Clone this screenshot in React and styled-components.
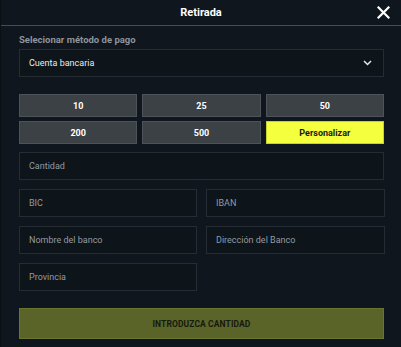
import React from "react";
import styled, { createGlobalStyle } from "styled-components";

const Global = createGlobalStyle`
  html, body { margin: 0; padding: 0; background: #0f161d; }
  body { font-family: Roboto, "Noto Sans", "Liberation Sans", sans-serif; }
  * { box-sizing: border-box; }
`;

const Modal = styled.div`
  width: 401px;
  height: 347px;
  background: #0f161d;
  display: flex;
  flex-direction: column;
  border-left: 1px solid #0a0f14;
`;

const Header = styled.div`
  height: 26px;
  display: flex;
  align-items: center;
  justify-content: center;
  position: relative;
  border-bottom: 1px solid #454c53;
  color: #ffffff;
  font-weight: 700;
  font-size: 11px;
`;

const Close = styled.button`
  position: absolute;
  right: 11px;
  top: 5px;
  width: 14px;
  height: 14px;
  padding: 0;
  border: 0;
  background: none;
  display: flex;
  align-items: center;
  justify-content: center;
`;

const Body = styled.div`
  padding: 8px 17px 0 18px;
  display: flex;
  flex-direction: column;
`;

const Label = styled.div`
  color: #8d949b;
  font-size: 9.5px;
  font-weight: 700;
  height: 15px;
  line-height: 12px;
`;

const Field = styled.div`
  height: 28px;
  border: 1px solid #252c33;
  background: #0d141a;
  display: flex;
  align-items: center;
  justify-content: space-between;
  padding: 0 10px 0 9px;
  font-size: 9px;
  color: ${(p) => (p.$filled ? "#e9ecee" : "#959ba1")};
`;

const Chevron = styled.svg`
  width: 9px;
  height: 6px;
  margin-right: 1px;
`;

const Amounts = styled.div`
  margin-top: 17px;
  display: grid;
  grid-template-columns: repeat(3, 1fr);
  column-gap: 5px;
  row-gap: 4px;
`;

const Amount = styled.button`
  height: 23px;
  border: 1px solid ${(p) => (p.$active ? "#c8d030" : "#4d5358")};
  background: ${(p) => (p.$active ? "#f4ff3d" : "#3b4145")};
  color: ${(p) => (p.$active ? "#1a1d10" : "#ffffff")};
  font-family: inherit;
  font-size: 9px;
  font-weight: 700;
  padding: 0;
`;

const Stack = styled.div`
  margin-top: 8px;
  display: flex;
  flex-direction: column;
  gap: 9px;
`;

const Row = styled.div`
  display: grid;
  grid-template-columns: 178px 179px;
  column-gap: 9px;
`;

const Submit = styled.button`
  margin-top: 17px;
  height: 31px;
  border: 1px solid #6a7431;
  background: #5a6429;
  color: #161a0c;
  font-family: inherit;
  font-size: 8.5px;
  font-weight: 700;
  letter-spacing: 0.1px;
`;

export default function App() {
  return (
    <>
      <Global />
      <Modal>
        <Header>
          Retirada
          <Close aria-label="close">
            <svg width="13" height="13" viewBox="0 0 13 13">
              <path d="M1.5 1.5 L11.5 11.5 M11.5 1.5 L1.5 11.5" stroke="#fff" strokeWidth="2.2" strokeLinecap="square" />
            </svg>
          </Close>
        </Header>
        <Body>
          <Label>Selecionar método de pago</Label>
          <Field $filled>
            Cuenta bancaria
            <Chevron viewBox="0 0 9 6">
              <path d="M1 1 L4.5 4.5 L8 1" fill="none" stroke="#e6e9ec" strokeWidth="1.5" />
            </Chevron>
          </Field>
          <Amounts>
            {["10", "25", "50", "200", "500"].map((v) => (
              <Amount key={v}>{v}</Amount>
            ))}
            <Amount $active>Personalizar</Amount>
          </Amounts>
          <Stack>
            <Field>Cantidad</Field>
            <Row>
              <Field>BIC</Field>
              <Field>IBAN</Field>
            </Row>
            <Row>
              <Field>Nombre del banco</Field>
              <Field>Dirección del Banco</Field>
            </Row>
            <Row>
              <Field>Provincia</Field>
            </Row>
          </Stack>
          <Submit>INTRODUZCA CANTIDAD</Submit>
        </Body>
      </Modal>
    </>
  );
}
